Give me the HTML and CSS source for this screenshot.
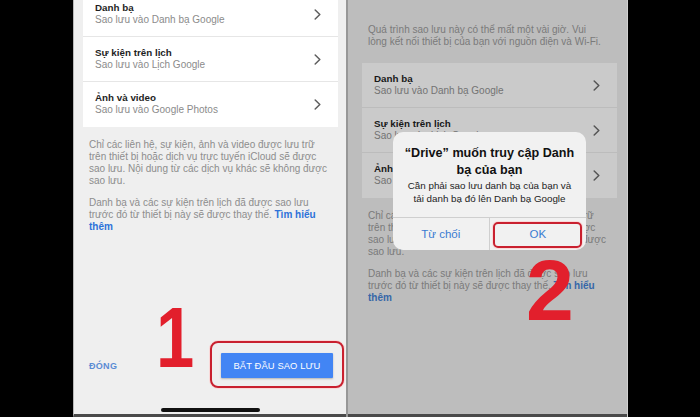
FILE: index.html
```html
<!DOCTYPE html>
<html lang="vi">
<head>
<meta charset="utf-8">
<title>Sao lưu</title>
<link rel="stylesheet" href="styles.css">
</head>
<body>
<div class="stage">
  <section class="screen screen-left">
    <div class="card card-scrolled">
      <div class="row">
        <div class="row-text"><div class="row-title">Danh bạ</div><div class="row-sub">Sao lưu vào Danh bạ Google</div></div>
        <svg class="chev" viewBox="0 0 7 11" width="7" height="11"><polyline points="1.2,1 5.8,5.5 1.2,10" /></svg>
      </div>
      <div class="row">
        <div class="row-text"><div class="row-title">Sự kiện trên lịch</div><div class="row-sub">Sao lưu vào Lịch Google</div></div>
        <svg class="chev" viewBox="0 0 7 11" width="7" height="11"><polyline points="1.2,1 5.8,5.5 1.2,10" /></svg>
      </div>
      <div class="row">
        <div class="row-text"><div class="row-title">Ảnh và video</div><div class="row-sub">Sao lưu vào Google Photos</div></div>
        <svg class="chev" viewBox="0 0 7 11" width="7" height="11"><polyline points="1.2,1 5.8,5.5 1.2,10" /></svg>
      </div>
    </div>
    <p class="note">Chỉ các liên hệ, sự kiện, ảnh và video được lưu trữ<br>trên thiết bị hoặc dịch vụ trực tuyến iCloud sẽ được<br>sao lưu. Nội dung từ các dịch vụ khác sẽ không được<br>sao lưu.</p>
    <p class="note note-second">Danh bạ và các sự kiện trên lịch đã được sao lưu<br>trước đó từ thiết bị này sẽ được thay thế. <span class="link">Tìm hiểu<br>thêm</span></p>
    <div class="actions">
      <span class="close">ĐÓNG</span>
      <span class="start">BẮT ĐẦU SAO LƯU</span>
    </div>
    <div class="home-bar"></div>
  </section>
  <div class="divider"></div>
  <section class="screen screen-right">
    <p class="note intro">Quá trình sao lưu này có thể mất một vài giờ. Vui<br>lòng kết nối thiết bị của bạn với nguồn điện và Wi-Fi.</p>
    <div class="card">
      <div class="row">
        <div class="row-text"><div class="row-title">Danh bạ</div><div class="row-sub">Sao lưu vào Danh bạ Google</div></div>
        <svg class="chev" viewBox="0 0 7 11" width="7" height="11"><polyline points="1.2,1 5.8,5.5 1.2,10" /></svg>
      </div>
      <div class="row">
        <div class="row-text"><div class="row-title">Sự kiện trên lịch</div><div class="row-sub">Sao lưu vào Lịch Google</div></div>
        <svg class="chev" viewBox="0 0 7 11" width="7" height="11"><polyline points="1.2,1 5.8,5.5 1.2,10" /></svg>
      </div>
      <div class="row">
        <div class="row-text"><div class="row-title">Ảnh và video</div><div class="row-sub">Sao lưu vào Google Photos</div></div>
        <svg class="chev" viewBox="0 0 7 11" width="7" height="11"><polyline points="1.2,1 5.8,5.5 1.2,10" /></svg>
      </div>
    </div>
    <p class="note">Chỉ các liên hệ, sự kiện, ảnh và video được lưu trữ<br>trên thiết bị hoặc dịch vụ trực tuyến iCloud sẽ được<br>sao lưu. Nội dung từ các dịch vụ khác sẽ không được<br>sao lưu.</p>
    <p class="note note-second">Danh bạ và các sự kiện trên lịch đã được sao lưu<br>trước đó từ thiết bị này sẽ được thay thế. <span class="link">Tìm hiểu<br>thêm</span></p>

    <div class="dialog">
      <div class="dialog-body">
        <div class="dialog-title">“Drive” muốn truy cập Danh<br>bạ của bạn</div>
        <div class="dialog-msg">Cần phải sao lưu danh bạ của bạn và<br>tải danh bạ đó lên Danh bạ Google</div>
      </div>
      <div class="dialog-buttons">
        <span class="dialog-btn">Từ chối</span>
        <span class="dialog-btn">OK</span>
      </div>
    </div>
  </section>
  <div class="edge-right"></div>
</div>

<div class="highlight highlight-start"></div>
<div class="highlight highlight-ok"></div>
<div class="step step-1">1</div>
<div class="step step-2">2</div>
</body>
</html>
```

FILE: styles.css
```css
* { box-sizing: border-box; }

html, body {
  margin: 0;
  padding: 0;
}

body {
  width: 700px;
  height: 417px;
  background: #000;
  position: relative;
  overflow: hidden;
  font-family: "Liberation Sans", Arial, sans-serif;
}

.stage {
  display: flex;
  height: 417px;
  padding-left: 73px;
}

.screen {
  height: 417px;
  display: flex;
  flex-direction: column;
  border-bottom: 3px solid #4a4a4a;
  overflow: hidden;
  position: relative;
}

.screen-left {
  width: 273px;
  background: #efefef;
  border-left: 1px solid #b9b9b9;
}

.divider {
  width: 2px;
  height: 417px;
  background: #979797;
}

.screen-right {
  width: 279px;
  background: #bdbdbd;
}

.edge-right {
  width: 1px;
  height: 417px;
  background: #d0d0d0;
}

/* cards */
.card {
  width: 255px;
  background: #fff;
  flex-shrink: 0;
}

.screen-left .card { margin-left: 9px; }
.card-scrolled { margin-top: -8px; }

.screen-right .card {
  margin-left: 14px;
  margin-top: 15px;
  background: #cacaca;
}

.row {
  display: flex;
  align-items: center;
  justify-content: space-between;
  padding: 10px 17px 10px 12px;
  border-bottom: 1px solid #e6e6e6;
}

.row:last-child { border-bottom: 0; padding-bottom: 11px; }

.screen-right .row { border-bottom-color: #bcbcbc; }
.screen-right .row:last-child { border-bottom: 0; }

.row-title {
  font-size: 9.8px;
  line-height: 12px;
  font-weight: bold;
  color: #1e1e1e;
}

.row-sub {
  font-size: 10px;
  line-height: 12px;
  color: #8b8b8b;
}

.screen-right .row-title { color: #181818; }
.screen-right .row-sub { color: #737373; }

.chev {
  fill: none;
  stroke: #5e5e5e;
  stroke-width: 1.5;
  stroke-linecap: round;
  stroke-linejoin: round;
}

.screen-right .chev { stroke: #555; }

/* notes */
.note {
  margin: 12px 0 0;
  font-size: 10px;
  line-height: 12px;
  color: #8d8d8d;
  white-space: nowrap;
}

.screen-left .note { padding-left: 15px; }
.screen-right .note { padding-left: 20px; color: #7a7a7a; }

.note-second { margin-top: 10px; }

.screen-right .intro { margin-top: 24px; }

.link { color: #2d72d9; font-weight: bold; }
.screen-right .link { color: #3667a8; }

/* bottom actions */
.actions {
  margin-top: auto;
  display: flex;
  align-items: center;
  justify-content: space-between;
  padding: 0 13px 0 15px;
}

.close {
  font-size: 9px;
  font-weight: bold;
  color: #5a8bd4;
  letter-spacing: 0.3px;
}

.start {
  width: 112px;
  height: 25px;
  background: #4285f4;
  color: #fff;
  font-size: 9.4px;
  display: flex;
  align-items: center;
  justify-content: center;
  border-radius: 1px;
  box-shadow: 0 1px 2px rgba(0,0,0,0.25);
  letter-spacing: 0.1px;
}

.home-bar {
  width: 99px;
  height: 4px;
  border-radius: 2px;
  background: #111;
  margin: 30px auto 2px;
}

/* dialog */
.dialog {
  position: absolute;
  left: 45px;
  top: 132px;
  width: 193px;
  height: 118px;
  background: #f1f1f1;
  border-radius: 10px;
  display: flex;
  flex-direction: column;
  text-align: center;
}

.dialog-body {
  padding: 13px 6px 12px;
  border-bottom: 1px solid #cfcfcf;
}

.dialog-title {
  font-size: 12.6px;
  line-height: 17px;
  font-weight: bold;
  color: #111;
}

.dialog-msg {
  font-size: 9.8px;
  line-height: 13px;
  color: #222;
}

.dialog-buttons {
  flex: 1;
  display: grid;
  grid-template-columns: 1fr 1fr;
}

.dialog-btn {
  display: flex;
  align-items: center;
  justify-content: center;
  font-size: 11.5px;
  color: #3a7bd1;
}

.dialog-btn:first-child { border-right: 1px solid #cfcfcf; }

/* annotations */
.highlight {
  position: absolute;
  border: 2.5px solid #c9202f;
  box-shadow: 0 0 0 1px rgba(255,200,200,0.6);
}

.highlight-start {
  left: 210px;
  top: 341px;
  width: 134px;
  height: 47px;
  border-radius: 8px;
}

.highlight-ok {
  left: 493px;
  top: 222px;
  width: 89px;
  height: 26px;
  border-radius: 5px;
}

.step {
  position: absolute;
  font-family: "Liberation Sans", Arial, sans-serif;
  font-weight: bold;
  font-size: 86px;
  line-height: 1;
  color: #e21f2c;
}

.step-1 {
  left: 156px;
  top: 294px;
  transform: scaleX(0.8);
  transform-origin: left top;
}
.step-2 { left: 526px; top: 247px; }
```
